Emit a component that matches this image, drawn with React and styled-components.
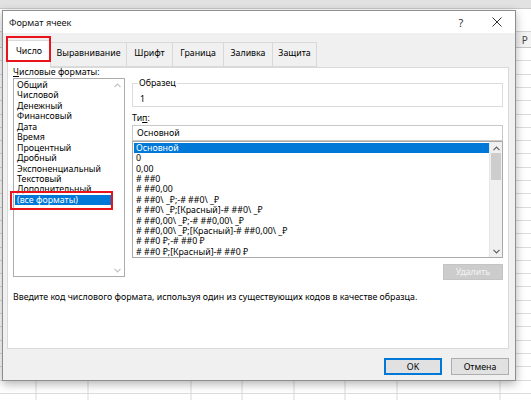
import React from 'react';
import styled, { createGlobalStyle } from 'styled-components';

const Global = createGlobalStyle`
  html, body { margin: 0; padding: 0; background: #fff; }
  body { font-family: "Noto Sans", "DejaVu Sans", sans-serif; }
  * { box-sizing: border-box; }
`;

const Sheet = styled.div`
  position: relative;
  width: 531px;
  height: 400px;
  overflow: hidden;
  display: flex;
  flex-direction: column;
  background: #fff;
`;

const TopStrip = styled.div`
  height: 9px;
  flex: none;
  background: #e2e2e2;
  border-bottom: 1px solid #c9c9c9;
`;

const Band = styled.div`
  height: 23px;
  flex: none;
  background: #fff;
  border-bottom: 1px solid #d4d4d4;
`;

const HeaderRow = styled.div`
  height: 16px;
  flex: none;
  display: flex;
  background: #f3f3f3;
  border-bottom: 1px solid #c6c6c6;
`;

const HeaderCell = styled.div`
  flex: none;
  width: ${(p) => p.$w}px;
  border-right: 1px solid #d4d4d4;
  display: flex;
  align-items: center;
  justify-content: center;
  font: 10px "Noto Sans", sans-serif;
  color: #444;
`;

const Grid = styled.div`
  flex: 1;
  background-color: #fff;
  background-image:
    repeating-linear-gradient(90deg, transparent 0 50.5px, #d9d9d9 50.5px 51.5px),
    repeating-linear-gradient(180deg, transparent 0 12.3px, #dcdcdc 12.3px 13.3px);
  background-position: -14.5px 0, 0 0;
`;

const Dialog = styled.div`
  position: absolute;
  left: 2px;
  top: 10px;
  width: 514px;
  height: 371px;
  border: 1px solid #8e8e8e;
  background: #f0f0f0;
  box-shadow: 0 3px 9px rgba(0, 0, 0, 0.3);
  display: flex;
  flex-direction: column;
  font-family: "Noto Sans", "DejaVu Sans", sans-serif;
  font-size: 8.8px;
  color: #000;
`;

const TitleBar = styled.div`
  height: 22px;
  flex: none;
  background: #fff;
  display: flex;
  align-items: center;
  padding-left: 6px;
`;

const Title = styled.div`
  flex: 1;
  font-size: 9.1px;
  color: #111;
`;

const TitleBtn = styled.div`
  width: ${(p) => p.$w}px;
  height: 22px;
  margin-right: ${(p) => p.$mr || 0}px;
  display: flex;
  align-items: center;
  justify-content: center;
  color: #333;
  font-size: 11px;
`;

const TabBar = styled.div`
  height: 27px;
  flex: none;
  margin-top: 7px;
  display: flex;
  align-items: flex-end;
  padding-left: 4px;
  position: relative;
  z-index: 1;
`;

const Tab = styled.div`
  width: ${(p) => p.$w}px;
  height: ${(p) => (p.$active ? 28 : 25)}px;
  margin-bottom: ${(p) => (p.$active ? -1 : 0)}px;
  background: ${(p) => (p.$active ? '#fff' : '#f0f0f0')};
  border: 1px solid #d9d9d9;
  border-bottom: ${(p) => (p.$active ? 'none' : '1px solid #d9d9d9')};
  border-left: ${(p) => (p.$first ? '1px solid #d9d9d9' : 'none')};
  display: flex;
  align-items: center;
  justify-content: center;
  padding-bottom: ${(p) => (p.$active ? 7 : 4)}px;
  font-size: 8.8px;
  color: #000;
`;

const Panel = styled.div`
  height: 282px;
  flex: none;
  margin: 0 6px 0 4px;
  border: 1px solid #d9d9d9;
  background: #fff;
  display: flex;
  flex-direction: column;
  padding: 0 5px 0 5px;
`;

const Columns = styled.div`
  display: grid;
  grid-template-columns: 112px 1fr;
  column-gap: 7px;
`;

const Col = styled.div`
  display: flex;
  flex-direction: column;
`;

const Label = styled.div`
  line-height: 9px;
  height: 9px;
  margin-top: ${(p) => p.$mt || 0}px;
  color: #000;
  white-space: nowrap;
`;

const Key = styled.span`
  text-decoration: underline;
  text-underline-offset: 1px;
`;

const ListBox = styled.div`
  margin-top: 1px;
  height: 199px;
  border: 1px solid #acacac;
  display: flex;
  background: #fff;
`;

const Items = styled.div`
  flex: 1;
  padding: 1px 0 0 1px;
  display: flex;
  flex-direction: column;
`;

const Item = styled.div`
  height: 10.45px;
  line-height: 10.45px;
  padding-left: 2px;
  white-space: nowrap;
  overflow: hidden;
  background: ${(p) => (p.$sel ? '#0078d7' : 'transparent')};
  color: ${(p) => (p.$sel ? '#fff' : '#000')};
  font-size: 8.8px;
`;

const ScrollCol = styled.div`
  width: 13px;
  flex: none;
  display: flex;
  flex-direction: column;
  justify-content: space-between;
  align-items: center;
  padding: 4px 0 3px;
  background: ${(p) => (p.$track ? '#f0f0f0' : 'transparent')};
  border-left: ${(p) => (p.$track ? '1px solid #e6e6e6' : 'none')};
`;

const Thumb = styled.div`
  width: 10px;
  height: 27px;
  background: #cdcdcd;
  margin-top: 2px;
`;

const Spacer = styled.div`
  flex: 1;
`;

const Group = styled.fieldset`
  margin: 10px 0 0 0;
  padding: 0 0 2px 7px;
  border: 1px solid #dcdcdc;
  min-width: 0;
`;

const Legend = styled.legend`
  padding: 0 1px;
  margin-left: -2px;
  line-height: 10px;
  font-size: 8.8px;
  color: #000;
`;

const Sample = styled.div`
  margin-top: 6px;
  line-height: 10px;
  height: 10px;
`;

const TextInput = styled.div`
  margin-top: 2px;
  height: 16px;
  border: 1px solid #c9c9c9;
  display: flex;
  align-items: center;
  padding-left: 4px;
  background: #fff;
`;

const TypeList = styled.div`
  height: 117px;
  border: 1px solid #a9a9a9;
  display: flex;
  background: #fff;
`;

const ButtonRow = styled.div`
  display: flex;
  justify-content: flex-end;
  margin-top: 6px;
`;

const DisabledButton = styled.div`
  width: 60px;
  height: 16px;
  background: #cccccc;
  border: 1px solid #c4c4c4;
  color: #f4f4f4;
  display: flex;
  align-items: center;
  justify-content: center;
  font-size: 8.8px;
`;

const Description = styled.div`
  margin-top: 12px;
  line-height: 10px;
  white-space: nowrap;
  color: #000;
`;

const Footer = styled.div`
  flex: 1;
  display: flex;
  justify-content: flex-end;
  align-items: flex-start;
  gap: 9px;
  padding: 9px 6px 0 0;
`;

const Button = styled.div`
  width: 58px;
  height: 17px;
  background: #e1e1e1;
  border: 1px solid ${(p) => (p.$default ? '#0078d7' : '#adadad')};
  box-shadow: ${(p) => (p.$default ? 'inset 0 0 0 1px #0078d7' : 'none')};
  display: flex;
  align-items: center;
  justify-content: center;
  font-size: 8.8px;
  color: #000;
`;

const Annotation = styled.div`
  position: absolute;
  left: ${(p) => p.$x}px;
  top: ${(p) => p.$y}px;
  width: ${(p) => p.$w}px;
  height: ${(p) => p.$h}px;
  border: 2px solid #e8131b;
  pointer-events: none;
  z-index: 5;
`;

const Chevron = ({ up, color }) => (
  <svg width="7" height="5" viewBox="0 0 7 5">
    <path
      d={up ? 'M0.5 4.2 L3.5 1.2 L6.5 4.2' : 'M0.5 0.8 L3.5 3.8 L6.5 0.8'}
      fill="none"
      stroke={color}
      strokeWidth="1.2"
    />
  </svg>
);

const CloseIcon = () => (
  <svg width="10" height="10" viewBox="0 0 10 10">
    <path d="M0.5 0.5 L9.5 9.5 M9.5 0.5 L0.5 9.5" stroke="#333" strokeWidth="1" />
  </svg>
);

const categories = [
  'Общий',
  'Числовой',
  'Денежный',
  'Финансовый',
  'Дата',
  'Время',
  'Процентный',
  'Дробный',
  'Экспоненциальный',
  'Текстовый',
  'Дополнительный',
  '(все форматы)',
];

const formats = [
  'Основной',
  '0',
  '0,00',
  '# ##0',
  '# ##0,00',
  '# ##0\\ _₽;-# ##0\\ _₽',
  '# ##0\\ _₽;[Красный]-# ##0\\ _₽',
  '# ##0,00\\ _₽;-# ##0,00\\ _₽',
  '# ##0,00\\ _₽;[Красный]-# ##0,00\\ _₽',
  '# ##0 ₽;-# ##0 ₽',
  '# ##0 ₽;[Красный]-# ##0 ₽',
];

const tabs = [
  { label: 'Число', w: 44, active: true },
  { label: 'Выравнивание', w: 76 },
  { label: 'Шрифт', w: 46 },
  { label: 'Граница', w: 51 },
  { label: 'Заливка', w: 49 },
  { label: 'Защита', w: 44 },
];

const colWidths = [36, 51.5, 51.5, 51.5, 51.5, 51.5, 51.5, 51.5, 51.5, 51.5, 51.5];

export default function App() {
  return (
    <>
      <Global />
      <Sheet>
        <TopStrip />
        <Band />
        <HeaderRow>
          {colWidths.map((w, i) => (
            <HeaderCell key={i} $w={w}>
              {i === colWidths.length - 1 ? 'P' : ''}
            </HeaderCell>
          ))}
        </HeaderRow>
        <Grid />

        <Dialog>
          <TitleBar>
            <Title>Формат ячеек</Title>
            <TitleBtn $w={30} $mr={3}>?</TitleBtn>
            <TitleBtn $w={36}>
              <CloseIcon />
            </TitleBtn>
          </TitleBar>

          <TabBar>
            {tabs.map((t, i) => (
              <Tab key={t.label} $w={t.w} $active={t.active} $first={i === 0}>
                {t.label}
              </Tab>
            ))}
          </TabBar>

          <Panel>
            <Columns>
              <Col>
                <Label>
                  <Key>Ч</Key>исловые форматы:
                </Label>
                <ListBox>
                  <Items>
                    {categories.map((c) => (
                      <Item key={c} $sel={c === '(все форматы)'}>
                        {c}
                      </Item>
                    ))}
                  </Items>
                  <ScrollCol>
                    <Chevron up color="#c2c2c2" />
                    <Chevron color="#c2c2c2" />
                  </ScrollCol>
                </ListBox>
              </Col>

              <Col>
                <Group>
                  <Legend>Образец</Legend>
                  <Sample>1</Sample>
                </Group>
                <Label $mt={7}>
                  Ти<Key>п</Key>:
                </Label>
                <TextInput>Основной</TextInput>
                <TypeList>
                  <Items>
                    {formats.map((f, i) => (
                      <Item key={f} $sel={i === 0}>
                        {f}
                      </Item>
                    ))}
                  </Items>
                  <ScrollCol $track>
                    <Chevron up color="#606060" />
                    <Thumb />
                    <Spacer />
                    <Chevron color="#606060" />
                  </ScrollCol>
                </TypeList>
                <ButtonRow>
                  <DisabledButton>Удалить</DisabledButton>
                </ButtonRow>
              </Col>
            </Columns>
            <Description>
              Введите код числового формата, используя один из существующих кодов в качестве образца.
            </Description>
          </Panel>

          <Footer>
            <Button $default>OK</Button>
            <Button>Отмена</Button>
          </Footer>
        </Dialog>

        <Annotation $x={6} $y={36} $w={45} $h={26} />
        <Annotation $x={10} $y={191} $w={103} $h={19} />
      </Sheet>
    </>
  );
}
